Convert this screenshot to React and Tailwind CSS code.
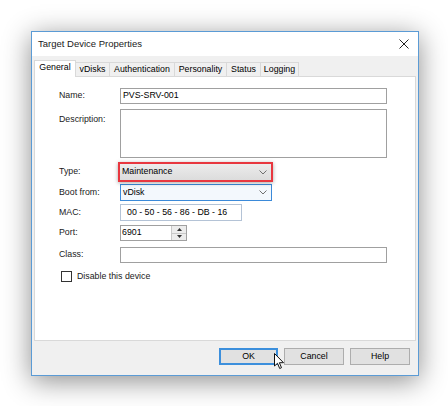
import React from 'react';

const tabs = [
    { name: 'General', w: 'w-[42px]', active: true },
    { name: 'vDisks', w: 'w-[35px]' },
    { name: 'Authentication', w: 'w-[66px]' },
    { name: 'Personality', w: 'w-[53px]' },
    { name: 'Status', w: 'w-[35px]' },
    { name: 'Logging', w: 'w-[39px]' },
];

const Chevron = () => (
    <svg width="8" height="5" viewBox="0 0 8 5" className="mr-[4px]">
        <polyline points="0.5,0.5 4,4 7.5,0.5" fill="none" stroke="#707070" strokeWidth="1" />
    </svg>
);

const Label = ({ children, top }) => (
    <div className={`w-[61px] shrink-0 text-[#1a1a1a] ${top ? 'pt-[4px] self-start' : ''}`}>{children}</div>
);

export default function App() {
    return (
        <div className="min-h-[406px] w-[448px] bg-white pt-[31px] pl-[31px] font-['Liberation_Sans',Arial,sans-serif] text-[8.8px] text-black">
            <div className="w-[388px] h-[345px] border border-[#5b9bd5] bg-[#f0f0f0] shadow-[0_5px_26px_rgba(0,0,0,0.45)] flex flex-col">
                {/* title bar */}
                <div className="h-[24px] bg-white flex items-center justify-between pl-[6px] pr-[8px]">
                    <span className="text-[9.5px] text-[#1a1a1a]">Target Device Properties</span>
                    <svg width="10" height="10" viewBox="0 0 10 10" className="mr-[1px]">
                        <line x1="0.5" y1="0.5" x2="9.5" y2="9.5" stroke="#222" strokeWidth="1" />
                        <line x1="9.5" y1="0.5" x2="0.5" y2="9.5" stroke="#222" strokeWidth="1" />
                    </svg>
                </div>

                {/* tabs */}
                <div className="h-[20px] flex items-end pl-[2px] relative z-10">
                    {tabs.map((t, i) => (
                        <div
                            key={t.name}
                            className={`${t.w} flex items-center justify-center border border-b-0 border-[#d9d9d9] ${i > 0 ? '-ml-px' : ''} ${
                                t.active ? 'h-[17px] -mb-px bg-white pb-[2px] relative z-10' : 'h-[14px] bg-[#f0f0f0]'
                            }`}
                        >
                            {t.name}
                        </div>
                    ))}
                </div>

                {/* panel */}
                <div className="mx-[2px] h-[265px] border border-[#d9d9d9] bg-white pl-[24px] pt-[11px] pr-[28px] flex flex-col">
                    <div className="flex items-center h-[16px]">
                        <Label>Name:</Label>
                        <div className="flex-1 h-full border border-[#a0a0a0] flex items-center pl-[2px]">PVS-SRV-001</div>
                    </div>

                    <div className="flex mt-[5px] h-[49px]">
                        <Label top>Description:</Label>
                        <div className="flex-1 h-full border border-[#a0a0a0]" />
                    </div>

                    <div className="flex items-center mt-[6px] h-[16px]">
                        <Label>Type:</Label>
                        <div className="relative w-[151px] h-full">
                            <div className="h-full bg-gradient-to-b from-[#ececec] to-[#dcdcdc] flex items-center justify-between pl-[2px]">
                                <span>Maintenance</span>
                                <Chevron />
                            </div>
                            <div className="absolute -inset-[2px] border-2 border-[#e8373f] shadow-[0_1px_4px_rgba(0,0,0,0.35)]" />
                        </div>
                    </div>

                    <div className="flex items-center mt-[4px] h-[17px]">
                        <Label>Boot from:</Label>
                        <div className="w-[152px] h-full border border-[#3b8ad9] bg-[#f3f8fd] flex items-center justify-between pl-[2px]">
                            <span>vDisk</span>
                            <Chevron />
                        </div>
                    </div>

                    <div className="flex items-center mt-[3px] h-[17px]">
                        <Label>MAC:</Label>
                        <div className="w-[122px] h-full border border-[#b4c3d6] flex items-center pl-[6px]">
                            00 - 50 - 56 - 86 - DB - 16
                        </div>
                    </div>

                    <div className="flex items-center mt-[4px] h-[16px]">
                        <Label>Port:</Label>
                        <div className="w-[67px] h-full border border-[#a0a0a0] flex">
                            <div className="flex-1 flex items-center pl-[1px]">6901</div>
                            <div className="w-[15px] flex flex-col border-l border-[#c8c8c8] bg-[#ececec]">
                                <div className="flex-1 flex items-center justify-center border-b border-[#c8c8c8]">
                                    <svg width="5" height="3" viewBox="0 0 5 3"><polygon points="2.5,0 5,3 0,3" fill="#333" /></svg>
                                </div>
                                <div className="flex-1 flex items-center justify-center">
                                    <svg width="5" height="3" viewBox="0 0 5 3"><polygon points="0,0 5,0 2.5,3" fill="#333" /></svg>
                                </div>
                            </div>
                        </div>
                    </div>

                    <div className="flex items-center mt-[6px] h-[16px]">
                        <Label>Class:</Label>
                        <div className="flex-1 h-full border border-[#a0a0a0]" />
                    </div>

                    <div className="flex items-center mt-[7px] pl-[2px]">
                        <div className="w-[11px] h-[11px] border border-[#333] bg-white" />
                        <span className="ml-[5px] text-[#1a1a1a]">Disable this device</span>
                    </div>
                </div>

                {/* buttons */}
                <div className="flex justify-end gap-[6px] pt-[7px] pr-[8px]">
                    <div className="relative w-[59px] h-[17px] border-2 border-[#3c8fdc] bg-[#e1e1e1] flex items-center justify-center">
                        OK
                        <svg width="11" height="17" viewBox="0 0 11 17" className="absolute left-[53px] top-[3px]">
                            <path d="M0.5,0.5 L0.5,13 L3.5,10.3 L5.7,15.5 L7.5,14.7 L5.4,9.7 L9.5,9.7 Z" fill="#fff" stroke="#111" strokeWidth="1" strokeLinejoin="round" />
                        </svg>
                    </div>
                    <div className="w-[60px] h-[17px] border border-[#adadad] bg-[#e1e1e1] flex items-center justify-center">Cancel</div>
                    <div className="w-[60px] h-[17px] border border-[#adadad] bg-[#e1e1e1] flex items-center justify-center">Help</div>
                </div>
            </div>
        </div>
    );
}
